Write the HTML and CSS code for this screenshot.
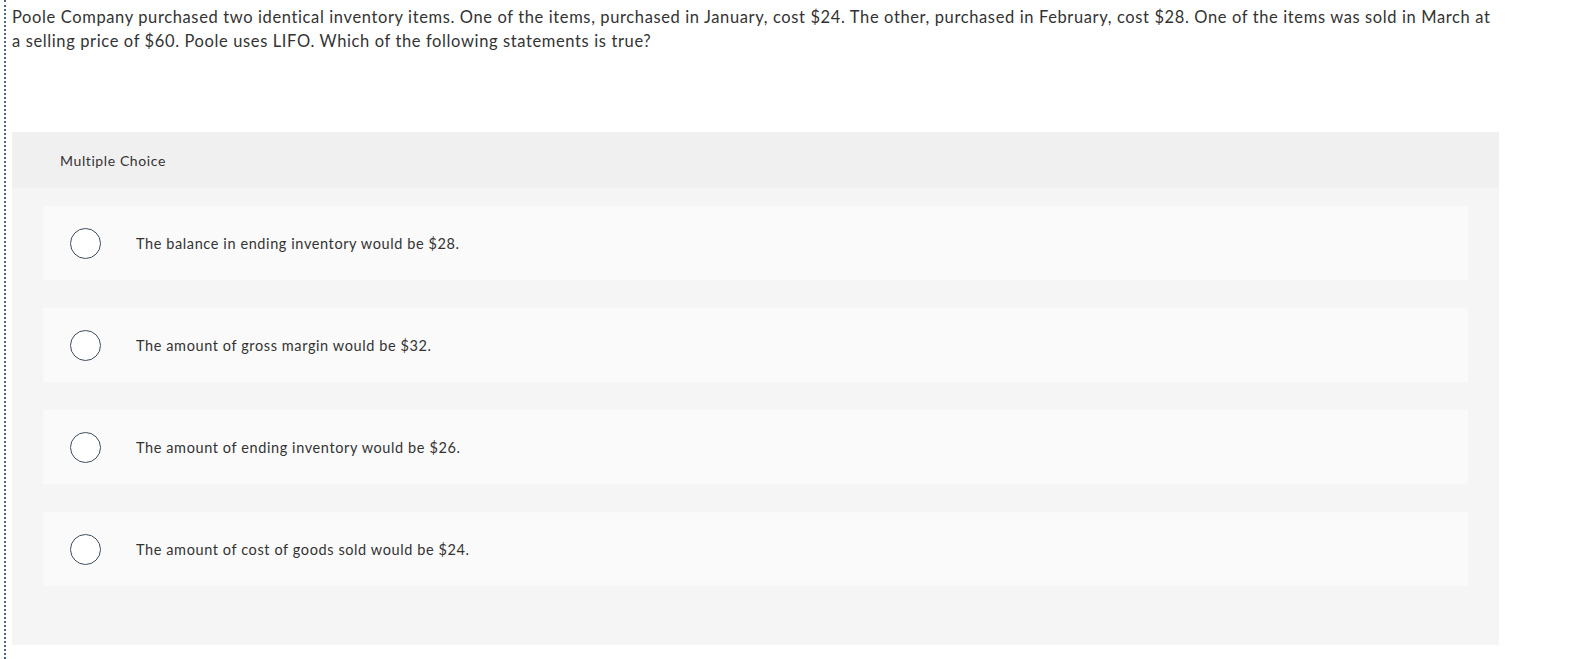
FILE: index.html
```html
<!DOCTYPE html>
<html lang="en">
<head>
<meta charset="utf-8">
<title>Multiple Choice</title>
<link rel="stylesheet" href="styles.css">
</head>
<body>
<div class="page">
  <p class="question">Poole Company purchased two identical inventory items. One of the items, purchased in January, cost $24. The other, purchased in February, cost $28. One of the items was sold in March at a selling price of $60. Poole uses LIFO. Which of the following statements is true?</p>
  <section class="panel">
    <div class="panel-head">Multiple Choice</div>
    <div class="panel-body">
      <div class="option"><span class="radio"></span><span class="label">The balance in ending inventory would be $28.</span></div>
      <div class="option"><span class="radio"></span><span class="label">The amount of gross margin would be $32.</span></div>
      <div class="option"><span class="radio"></span><span class="label">The amount of ending inventory would be $26.</span></div>
      <div class="option"><span class="radio"></span><span class="label">The amount of cost of goods sold would be $24.</span></div>
    </div>
  </section>
</div>
</body>
</html>
```
FILE: styles.css
```css
html, body {
  margin: 0;
  padding: 0;
  background: #ffffff;
}
body {
  font-family: "Lato", "Open Sans", sans-serif;
  color: #333333;
}
.page {
  margin-left: 4px;
  border-left: 2px dotted #4d6382;
  padding-left: 6px;
  min-height: 659px;
  box-sizing: border-box;
  width: 1493px;
}
.question {
  margin: 0;
  padding-top: 5px;
  font-size: 16.5px;
  letter-spacing: 0.62px;
  line-height: 24px;
  color: #333333;
}
.panel {
  margin-top: 79px;
  width: 1487px;
}
.panel-head {
  height: 56px;
  background: #f0f0f0;
  display: flex;
  align-items: center;
  padding-left: 48px;
  font-size: 14px;
  letter-spacing: 0.6px;
  color: #333333;
}
.panel-body {
  background: #f5f5f5;
  padding: 18px 31px 59px 31px;
  display: flex;
  flex-direction: column;
  gap: 28px;
}
.option {
  height: 74px;
  background: #fafafa;
  display: flex;
  align-items: center;
  padding-left: 27px;
}
.radio {
  width: 29px;
  height: 29px;
  border: 1.5px solid #3e4d60;
  border-radius: 50%;
  background: #ffffff;
  flex: none;
}
.label {
  margin-left: 35px;
  font-size: 14.5px;
  letter-spacing: 0.6px;
  color: #333333;
}
```
